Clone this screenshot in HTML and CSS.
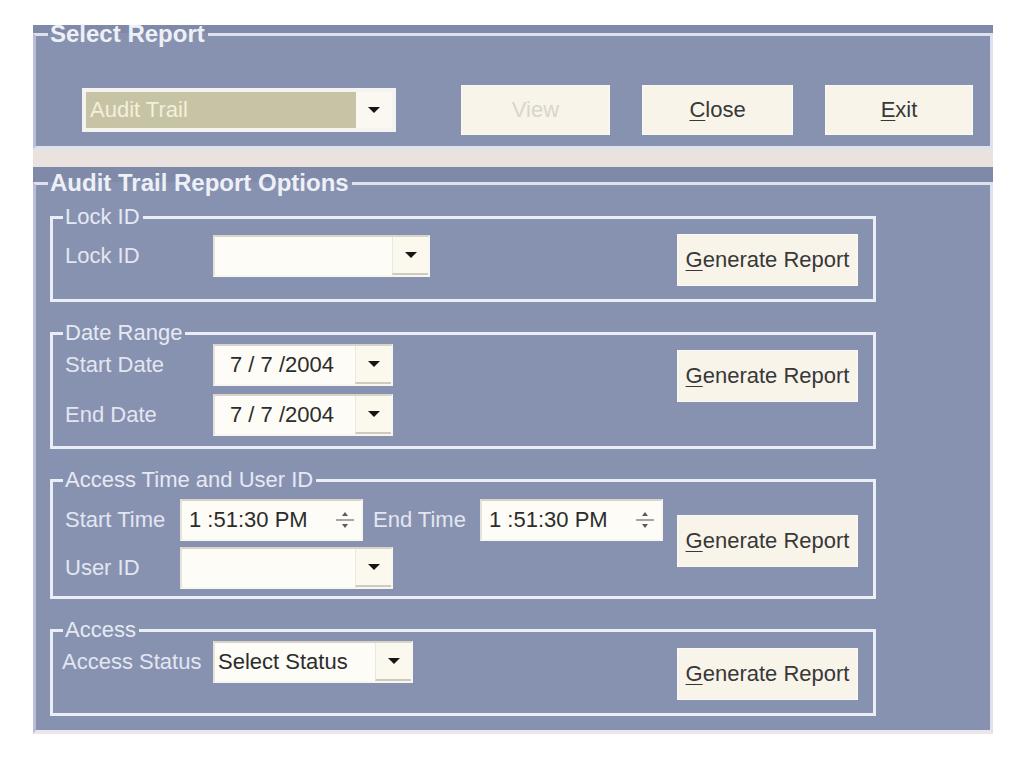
FILE: index.html
```html
<!DOCTYPE html>
<html lang="en">
<head>
<meta charset="utf-8">
<title>Audit Trail Report</title>
<link rel="stylesheet" href="styles.css">
</head>
<body>
<div class="window">

  <section class="panel panel-select">
    <fieldset class="frame frame-select">
      <legend class="frame-title">Select Report</legend>
      <div class="select-row">
        <div class="combo combo-report">
          <span class="combo-value">Audit Trail</span>
          <span class="combo-btn"><i class="arrow"></i></span>
        </div>
        <button class="btn btn-cmd btn-view" disabled>View</button>
        <button class="btn btn-cmd btn-close"><u>C</u>lose</button>
        <button class="btn btn-cmd btn-exit"><u>E</u>xit</button>
      </div>
    </fieldset>
  </section>

  <section class="panel panel-options">
    <fieldset class="frame frame-options">
      <legend class="frame-title">Audit Trail Report Options</legend>
      <div class="groups">

        <fieldset class="group g-lock">
          <legend class="group-title">Lock ID</legend>
          <div class="group-body">
            <div class="fields">
              <div class="row">
                <span class="label">Lock ID</span>
                <div class="combo w-lock"><span class="combo-value"></span><span class="combo-btn"><i class="arrow"></i></span></div>
              </div>
            </div>
            <button class="btn btn-gen"><u>G</u>enerate Report</button>
          </div>
        </fieldset>

        <fieldset class="group g-date">
          <legend class="group-title">Date Range</legend>
          <div class="group-body">
            <div class="fields">
              <div class="row">
                <span class="label">Start Date</span>
                <div class="combo w-date"><span class="combo-value date">7 / 7 /2004</span><span class="combo-btn"><i class="arrow"></i></span></div>
              </div>
              <div class="row">
                <span class="label">End Date</span>
                <div class="combo w-date"><span class="combo-value date">7 / 7 /2004</span><span class="combo-btn"><i class="arrow"></i></span></div>
              </div>
            </div>
            <button class="btn btn-gen"><u>G</u>enerate Report</button>
          </div>
        </fieldset>

        <fieldset class="group g-time">
          <legend class="group-title">Access Time and User ID</legend>
          <div class="group-body">
            <div class="fields">
              <div class="row">
                <span class="label label-short">Start Time</span>
                <div class="combo w-time">
                  <span class="combo-value time">1 :51:30 PM</span>
                  <span class="spin">
                    <svg width="22" height="26" viewBox="0 0 22 26"><path d="M11 5 L8 9 H14 Z" fill="#5a5a5a"/><path d="M2 13 H20" stroke="#8a8a8a" stroke-width="1.5"/><path d="M8 17 H14 L11 21 Z" fill="#5a5a5a"/></svg>
                  </span>
                </div>
                <span class="label label-end">End Time</span>
                <div class="combo w-time">
                  <span class="combo-value time">1 :51:30 PM</span>
                  <span class="spin">
                    <svg width="22" height="26" viewBox="0 0 22 26"><path d="M11 5 L8 9 H14 Z" fill="#5a5a5a"/><path d="M2 13 H20" stroke="#8a8a8a" stroke-width="1.5"/><path d="M8 17 H14 L11 21 Z" fill="#5a5a5a"/></svg>
                  </span>
                </div>
              </div>
              <div class="row">
                <span class="label label-short">User ID</span>
                <div class="combo w-user"><span class="combo-value"></span><span class="combo-btn"><i class="arrow"></i></span></div>
              </div>
            </div>
            <button class="btn btn-gen"><u>G</u>enerate Report</button>
          </div>
        </fieldset>

        <fieldset class="group g-access">
          <legend class="group-title">Access</legend>
          <div class="group-body">
            <div class="fields">
              <div class="row">
                <span class="label label-status">Access Status</span>
                <div class="combo w-status"><span class="combo-value status">Select Status</span><span class="combo-btn"><i class="arrow"></i></span></div>
              </div>
            </div>
            <button class="btn btn-gen"><u>G</u>enerate Report</button>
          </div>
        </fieldset>

      </div>
    </fieldset>
  </section>

</div>
</body>
</html>
```

FILE: styles.css
```css
* {
  box-sizing: border-box;
}

html, body {
  margin: 0;
  padding: 0;
  background: #ffffff;
}

body {
  font-family: "Liberation Sans", Arial, sans-serif;
  font-size: 22px;
  color: #333333;
}

/* outer form window */
.window {
  margin: 25px 0 0 33px;
  width: 960px;
  background: #e9e2df;
  display: flex;
  flex-direction: column;
  gap: 18px;
}

.panel {
  background: #7f89a8;
}

.panel-options {
  padding-top: 4px;
}

/* group frames */
.frame {
  margin: 0;
  padding: 0;
  min-width: 0;
  background: #8792b1;
  border: 3px solid #dfe2ee;
  border-left-color: #b9bdd6;
}

.frame-title {
  margin-left: 12px;
  padding: 0 3px 0 2px;
  font-weight: bold;
  font-size: 24px;
  color: #eef0f7;
}

.frame-select .frame-title {
  line-height: 18px;
}

.frame-options {
  border-bottom: 4px solid #ece5e9;
}

.frame-options .frame-title {
  line-height: 24px;
}

/* top row: report picker and command buttons */
.select-row {
  display: flex;
  align-items: center;
  padding: 42px 0 11px 46px;
}

.btn {
  font-family: inherit;
  font-size: 22px;
  color: #383838;
  background: #f8f4ea;
  border: 1px solid #fbf9f3;
  padding: 0;
  margin: 0;
  cursor: default;
}

.btn u {
  text-decoration-thickness: 1px;
  text-underline-offset: 3px;
}

.btn-cmd {
  height: 50px;
  width: 150px;
  margin-left: 32px;
}

.btn-view {
  margin-left: 65px;
  width: 149px;
  color: #d9d5cc;
}

.btn-close {
  width: 151px;
}

.btn-exit {
  width: 148px;
}

/* combo boxes */
.combo {
  display: flex;
  align-items: stretch;
  height: 42px;
  background: #fdfcf6;
  border: 2px solid #f7f6f1;
  border-top-color: #d8d4c8;
  border-left-color: #e6e3da;
}

.combo-value {
  flex: 1;
  display: flex;
  align-items: center;
  padding-left: 6px;
  color: #2c2c2c;
  white-space: nowrap;
  overflow: hidden;
}

.combo-value.date {
  padding-left: 15px;
}

.combo-value.status {
  padding-left: 3px;
}

.combo-value.time {
  padding-left: 7px;
}

.combo-btn {
  width: 36px;
  display: flex;
  align-items: center;
  justify-content: center;
  background: #fbf8ee;
  border-bottom: 2px solid #cfcabb;
  border-left: 1px solid #ece8dc;
}

.arrow {
  display: block;
  width: 0;
  height: 0;
  border-left: 6px solid transparent;
  border-right: 6px solid transparent;
  border-top: 6px solid #151515;
}

.spin {
  width: 32px;
  display: flex;
  align-items: center;
  justify-content: center;
}

.combo-report {
  width: 314px;
  height: 44px;
  border: 4px solid #f4f3ef;
  background: #c7c4a5;
}

.combo-report .combo-value {
  color: #f3efdc;
  padding-left: 4px;
}

.combo-report .combo-btn {
  background: #faf8f1;
  border-left: none;
  border-bottom: none;
}

.w-lock { width: 217px; }
.w-date { width: 180px; }
.w-time { width: 183px; }
.w-user { width: 213px; }
.w-status { width: 200px; }

/* report option groups */
.groups {
  display: flex;
  flex-direction: column;
  gap: 20px;
  padding: 11px 0 14px 14px;
}

.group {
  width: 826px;
  margin: 0;
  padding: 0;
  min-width: 0;
  border: 3px solid #eceef7;
}

.group-title {
  margin-left: 10px;
  padding: 0 3px 0 2px;
  line-height: 22px;
  color: #e6e9f3;
}

.group-body {
  display: flex;
  align-items: flex-start;
  padding: 0 15px 0 12px;
}

.fields {
  display: flex;
  flex-direction: column;
}

.row {
  display: flex;
  align-items: center;
}

.label {
  width: 148px;
  color: #e3e6f0;
  white-space: nowrap;
}

.label-short {
  width: 115px;
}

.label-end {
  width: 107px;
  margin-left: 10px;
}

.label-status {
  margin-left: -3px;
  width: 151px;
}

.btn-gen {
  margin-left: auto;
  width: 181px;
  height: 52px;
}

/* per-group spacing */
.g-lock .group-body {
  padding-top: 6px;
  padding-bottom: 13px;
}

.g-lock .fields {
  margin-top: 1px;
}

.g-date .group-body {
  padding-top: 0;
  padding-bottom: 10px;
}

.g-date .fields {
  gap: 8px;
}

.g-date .btn-gen {
  margin-top: 6px;
}

.g-time .group-body {
  padding-top: 8px;
  padding-bottom: 7px;
}

.g-time .fields {
  gap: 6px;
}

.g-time .btn-gen {
  margin-top: 16px;
}

.g-access .group-body {
  padding-top: 0;
  padding-bottom: 13px;
}

.g-access .btn-gen {
  margin-top: 7px;
}
```
